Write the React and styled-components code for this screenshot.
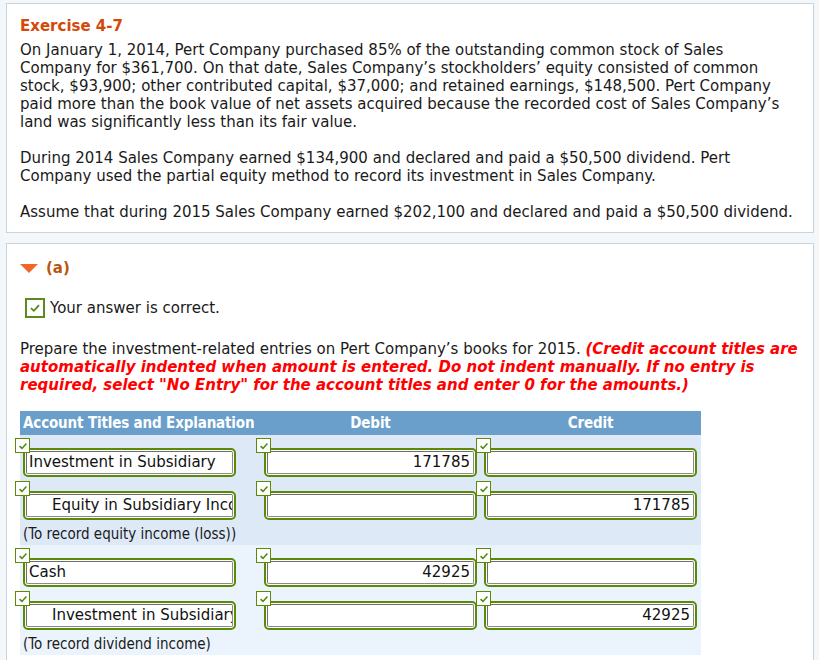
import React from 'react';
import styled, { createGlobalStyle } from 'styled-components';

const GlobalStyle = createGlobalStyle`
  html, body {
    margin: 0;
    background: #f4f7fa;
  }
  body {
    font-family: "DejaVu Sans", Verdana, sans-serif;
    font-size: 15px;
    color: #1a1a1a;
  }
`;

const entries = [
  {
    note: '(To record equity income (loss))',
    rows: [
      { title: 'Investment in Subsidiary', debit: '171785', credit: '' },
      { title: 'Equity in Subsidiary Income', debit: '', credit: '171785', indent: true },
    ],
  },
  {
    note: '(To record dividend income)',
    rows: [
      { title: 'Cash', debit: '42925', credit: '' },
      { title: 'Investment in Subsidiary', debit: '', credit: '42925', indent: true },
    ],
  },
];

function Check({ size = 13 }) {
  return (
    <svg width={size} height={size} viewBox="0 0 14 14">
      <path d="M3 7.2 L5.8 9.8 L11 4.2" fill="none" stroke="#4f8a10" strokeWidth="1.8" />
    </svg>
  );
}

function Field({ value, align, indent }) {
  return (
    <FieldWrap>
      <Badge>
        <Check size={12} />
      </Badge>
      <FieldBox $align={align} $indent={indent}>
        {value}
      </FieldBox>
    </FieldWrap>
  );
}

export default function App() {
  return (
    <Page>
      <GlobalStyle />
      <Card>
        <Title>Exercise 4-7</Title>
        <Para>
          On January 1, 2014, Pert Company purchased 85% of the outstanding common stock of Sales<br />
          Company for $361,700. On that date, Sales Company’s stockholders’ equity consisted of common<br />
          stock, $93,900; other contributed capital, $37,000; and retained earnings, $148,500. Pert Company<br />
          paid more than the book value of net assets acquired because the recorded cost of Sales Company’s<br />
          land was significantly less than its fair value.
        </Para>
        <Para>
          During 2014 Sales Company earned $134,900 and declared and paid a $50,500 dividend. Pert<br />
          Company used the partial equity method to record its investment in Sales Company.
        </Para>
        <Para>
          Assume that during 2015 Sales Company earned $202,100 and declared and paid a $50,500 dividend.
        </Para>
      </Card>

      <Card $grow>
        <PartHead>
          <Triangle />
          <PartLabel>(a)</PartLabel>
        </PartHead>

        <Correct>
          <BigCheck>
            <Check size={14} />
          </BigCheck>
          Your answer is correct.
        </Correct>

        <Prompt>
          Prepare the investment-related entries on Pert Company’s books for 2015.{' '}
          <Warn>
            (Credit account titles are<br />
            automatically indented when amount is entered. Do not indent manually. If no entry is<br />
            required, select "No Entry" for the account titles and enter 0 for the amounts.)
          </Warn>
        </Prompt>

        <Journal>
          <HeadRow>
            <HeadCell>Account Titles and Explanation</HeadCell>
            <HeadCell $center>Debit</HeadCell>
            <HeadCell $center>Credit</HeadCell>
          </HeadRow>
          {entries.map((entry, i) => (
            <Entry key={i} $shade={i % 2 === 0}>
              {entry.rows.map((row, j) => (
                <Line key={j}>
                  <Field value={row.title} indent={row.indent} />
                  <Field value={row.debit} align="right" />
                  <Field value={row.credit} align="right" />
                </Line>
              ))}
              <Note>{entry.note}</Note>
            </Entry>
          ))}
        </Journal>
      </Card>
    </Page>
  );
}

const Page = styled.div`
  display: flex;
  flex-direction: column;
  gap: 10px;
  padding: 3px 5px 0 6px;
  height: 657px;
  overflow: hidden;
`;

const Card = styled.section`
  background: #fff;
  border: 1px solid #c9d4e2;
  padding: 12px 4px 11px 13px;
  flex: ${(p) => (p.$grow ? '1' : 'none')};
  white-space: nowrap;
`;

const Title = styled.div`
  color: #d4480a;
  font-weight: bold;
  font-size: 15px;
  line-height: 20px;
  margin-bottom: 5px;
`;

const Para = styled.p`
  margin: 0 0 18px;
  line-height: 18px;
  &:last-child {
    margin-bottom: 0;
  }
`;

const PartHead = styled.div`
  display: flex;
  align-items: center;
  gap: 8px;
  height: 23px;
`;

const Triangle = styled.span`
  width: 0;
  height: 0;
  border-left: 9px solid transparent;
  border-right: 9px solid transparent;
  border-top: 9px solid #f2662a;
  margin-top: 2px;
`;

const PartLabel = styled.span`
  color: #b9560f;
  font-weight: bold;
  font-size: 15px;
`;

const Correct = styled.div`
  display: flex;
  align-items: center;
  gap: 5px;
  margin: 19px 0 0 5px;
  height: 20px;
`;

const BigCheck = styled.span`
  box-sizing: border-box;
  width: 20px;
  height: 20px;
  border: 2px solid #5c8a1e;
  display: flex;
  align-items: center;
  justify-content: center;
  background: #fff;
`;

const Prompt = styled.p`
  margin: 22px 0 0;
  line-height: 18px;
`;

const Warn = styled.b`
  color: #f00;
  font-style: italic;
`;

const Journal = styled.div`
  margin-top: 17px;
  width: 681px;
  white-space: normal;
`;

const columns = `
  display: grid;
  grid-template-columns: 241px 220px 220px;
  padding-left: 3px;
`;

const HeadRow = styled.div`
  ${columns}
  background: #6a9fcc;
  height: 24px;
  align-items: center;
`;

const HeadCell = styled.div`
  color: #fff;
  font-family: "DejaVu Sans Condensed", "DejaVu Sans", sans-serif;
  font-weight: bold;
  font-size: 15px;
  letter-spacing: -0.15px;
  width: 213px;
  white-space: nowrap;
  text-align: ${(p) => (p.$center ? 'center' : 'left')};
`;

const Entry = styled.div`
  background: ${(p) => (p.$shade ? '#dee9f7' : '#ebf3fc')};
  padding-top: 13px;
  height: 110px;
  box-sizing: border-box;
`;

const Line = styled.div`
  ${columns}
  margin-bottom: 14px;
`;

const FieldWrap = styled.div`
  position: relative;
  width: 213px;
  box-sizing: border-box;
  height: 29px;
  border: 2px solid #5b8a05;
  border-radius: 5px;
  padding: 1px;
  background: #fff;
`;

const Badge = styled.span`
  position: absolute;
  left: -10px;
  top: -12px;
  width: 15px;
  height: 15px;
  box-sizing: border-box;
  border: 1px solid #5b8a05;
  background: #fff;
  display: flex;
  align-items: center;
  justify-content: center;
`;

const FieldBox = styled.div`
  box-sizing: border-box;
  height: 100%;
  border: 1px solid #8a8a8a;
  border-top-color: #6e6e6e;
  border-left-color: #6e6e6e;
  border-radius: 2px;
  padding: 0 ${(p) => (p.$align === 'right' ? '3px' : '0')} 0 ${(p) => (p.$indent ? '25px' : '2px')};
  text-align: ${(p) => p.$align || 'left'};
  line-height: 21px;
  white-space: nowrap;
  overflow: hidden;
  font-size: 15px;
  color: #111;
`;

const Note = styled.div`
  margin-top: -9px;
  padding-left: 3px;
  font-family: "DejaVu Sans Condensed", "DejaVu Sans", sans-serif;
  font-size: 15px;
  line-height: 18px;
  white-space: nowrap;
`;
